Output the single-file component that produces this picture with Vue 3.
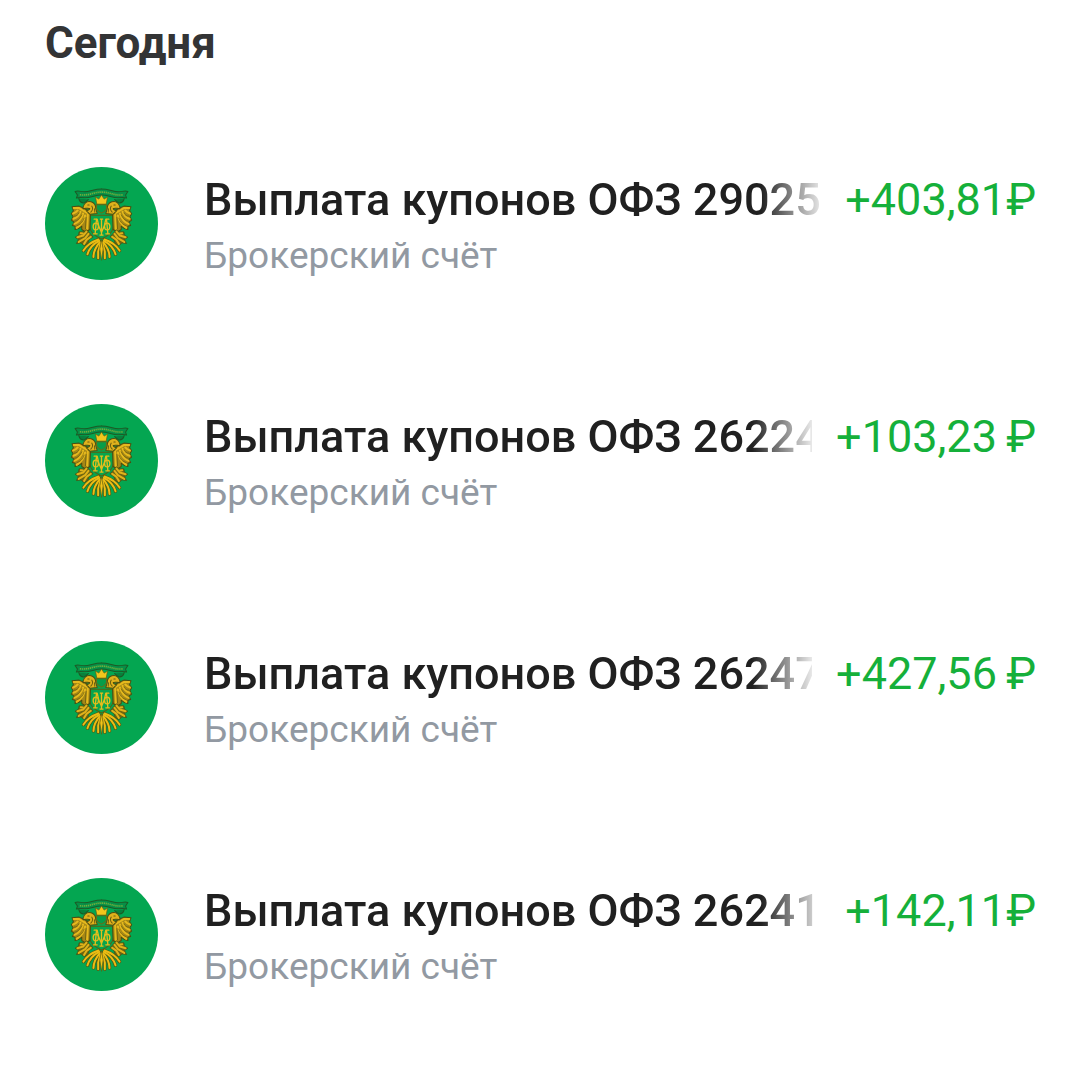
<script setup>
const operations = [
  {
    title: 'Выплата купонов ОФЗ 29025',
    account: 'Брокерский счёт',
    amount: '+403,81₽'
  },
  {
    title: 'Выплата купонов ОФЗ 26224',
    account: 'Брокерский счёт',
    amount: '+103,23\u2009₽'
  },
  {
    title: 'Выплата купонов ОФЗ 26247',
    account: 'Брокерский счёт',
    amount: '+427,56\u2009₽'
  },
  {
    title: 'Выплата купонов ОФЗ 26241',
    account: 'Брокерский счёт',
    amount: '+142,11₽'
  }
]
</script>
<template>
  <svg class="sprite" aria-hidden="true">
    <defs>
      <!-- left half of the emblem, mirrored for the right one -->
      <g id="emblem-half" stroke-linejoin="round" stroke-linecap="round">
        <!-- ribbon -->
        <path
          d="M101 19C80 19 66 27 50 27C40 27 32 23 22 26L29 37L26 46C34 43 42 44 50 45C66 46 82 37 101 37"
          fill="#078f47"
          stroke="#1d5a25"
          stroke-width="3"
        />
        <path d="M33 47C34 56 42 62 50 60C56 58 58 53 62 50" fill="#08803c" stroke="#1d5a25" stroke-width="3" />
        <!-- wing -->
        <path
          d="M13 72L34 70L50 77L62 84L68 94L66 140L54 148L42 140L42 130L34 136L22 140L22 130L14 128L19 118L11 112L16 102L11 93L17 84Z"
          fill="#a58717"
          stroke="#4a4d10"
          stroke-width="3"
        />
        <g fill="none" stroke="#e6b91d" stroke-width="6">
          <path d="M18 76L34 76L48 84L58 90" />
          <path d="M30 83C26 88 22 91 16 92" />
          <path d="M38 87C34 97 28 105 17 108" />
          <path d="M46 92C42 105 34 118 20 123" />
          <path d="M52 98C50 112 40 127 27 135" />
          <path d="M60 96L58 138" />
        </g>
        <g fill="none" stroke="#5c560f" stroke-width="2">
          <path d="M34 90C30 98 26 100 20 100" />
          <path d="M42 96C37 108 29 114 21 115" />
          <path d="M49 106C45 118 36 127 28 128" />
          <path d="M55 104L53 138" />
        </g>
        <!-- head and neck -->
        <path
          d="M46 72C50 60 60 54 70 57C80 60 84 68 84 78L88 92L66 94L56 84C62 82 66 80 66 77C60 78 54 74 46 78Z"
          fill="#dfb11c"
          stroke="#4f4f10"
          stroke-width="3"
        />
        <path d="M60 67L64 67M72 70C76 76 75 82 69 88M80 78L81 88" fill="none" stroke="#6a5e11" stroke-width="3" />
        <!-- claw and leaves -->
        <path
          d="M58 142L68 154L76 162L64 170L60 182L48 188L40 180L26 182L32 170L22 163L32 157L34 147L46 147Z"
          fill="#6f6611"
          stroke="#4a4d10"
          stroke-width="2"
        />
        <g fill="none" stroke="#e0b21a" stroke-width="6">
          <path d="M56 146L46 158L29 163" />
          <path d="M62 153L52 166L33 177" />
          <path d="M69 162L57 170L49 183" />
          <path d="M39 151L45 152" />
        </g>
        <!-- tail -->
        <g fill="none" stroke="#55540f" stroke-width="10">
          <path d="M92 170C74 176 58 186 47 203" />
          <path d="M94 174C78 182 65 195 59 214" />
          <path d="M96 178C86 190 77 202 77 222" />
          <path d="M98 182L91 206L91 226" />
        </g>
        <g fill="none" stroke="#ebbd14" stroke-width="6">
          <path d="M92 170C74 176 58 186 47 203" />
          <path d="M94 174C78 182 65 195 59 214" />
          <path d="M96 178C86 190 77 202 77 222" />
          <path d="M98 182L91 206L91 226" />
        </g>
        <!-- half of the shield monogram -->
        <g fill="none" stroke="#e6bd1c" stroke-width="4">
          <path d="M79 109L88 109C90 122 95 138 101 148" />
          <path d="M86 110L82 152M77 153L88 153" />
          <ellipse cx="84" cy="131" rx="8" ry="10" />
        </g>
      </g>
      <symbol id="emblem" viewBox="-68 -47 338 338">
        <circle cx="101" cy="122" r="169" fill="#04a651" />
        <path
          d="M66 97L136 97L136 132C136 150 120 160 101 168C82 160 66 150 66 132Z"
          fill="#08a54d"
          stroke="#5c5f12"
          stroke-width="3"
        />
        <use href="#emblem-half" />
        <use href="#emblem-half" transform="translate(202 0) scale(-1 1)" />
        <path
          d="M36 36C62 40 76 28 101 28C126 28 140 40 166 36"
          fill="none"
          stroke="#6fae3c"
          stroke-width="5"
          stroke-dasharray="4 2"
        />
        <path
          d="M86 66L116 66L116 76C114 84 108 88 101 91C94 88 88 84 86 76Z"
          fill="#079d49"
          stroke="#6d6c14"
          stroke-width="3"
        />
        <path
          d="M83 43L93 49L101 37L109 49L119 43L115 64L87 64Z"
          fill="#f2c61c"
          stroke="#5f6114"
          stroke-width="2"
          stroke-linejoin="round"
        />
        <path d="M101 110L101 157M96 109L106 109M95 157L107 157" fill="none" stroke="#e6bd1c" stroke-width="4" />
        <path
          d="M101 170L106 198L101 232L96 198Z"
          fill="#f2c318"
          stroke="#5c5b10"
          stroke-width="2"
          stroke-linejoin="round"
        />
      </symbol>
    </defs>
  </svg>
  <main class="operations">
    <h1 class="day">Сегодня</h1>
    <ul class="list">
      <li class="list-item" v-for="(item, i) of operations" :key="i">
        <svg class="logo" aria-hidden="true">
          <use href="#emblem" />
        </svg>
        <div class="info">
          <div class="row">
            <span class="title">{{ item.title }}</span>
            <span class="amount">{{ item.amount }}</span>
          </div>
          <span class="account">{{ item.account }}</span>
        </div>
      </li>
    </ul>
  </main>
</template>
<style>
body {
  margin: 0;
  background: #fff;
}
</style>
<style scoped>
.sprite {
  position: absolute;
  width: 0;
  height: 0;
}
.operations {
  padding: 15px 40px 0 45px;
  font-family: Roboto, 'Noto Sans', sans-serif;
}
.day {
  margin: 0;
  color: #333435;
  font-size: 44px;
  font-weight: 700;
  line-height: 56px;
}
.list {
  display: flex;
  flex-direction: column;
  gap: 120px;
  margin: 0;
  padding: 94px 0 0;
  list-style: none;
}
.list-item {
  display: flex;
  align-items: center;
  gap: 46px;
}
.logo {
  flex: none;
  width: 113px;
  height: 113px;
}
.info {
  flex: 1;
  min-width: 0;
  padding-top: 5px;
}
.row {
  display: flex;
  gap: 24px;
  line-height: 60px;
}
.title {
  flex: 1;
  min-width: 0;
  overflow: hidden;
  color: #202020;
  font-size: 45px;
  font-weight: 500;
  white-space: nowrap;
  mask-image: linear-gradient(to right, #000 calc(100% - 60px), rgba(0, 0, 0, 0.1));
}
.amount {
  flex: none;
  color: #15b03a;
  font-size: 45px;
}
.account {
  display: block;
  color: #9299a2;
  font-size: 37px;
  line-height: 52px;
}
</style>
